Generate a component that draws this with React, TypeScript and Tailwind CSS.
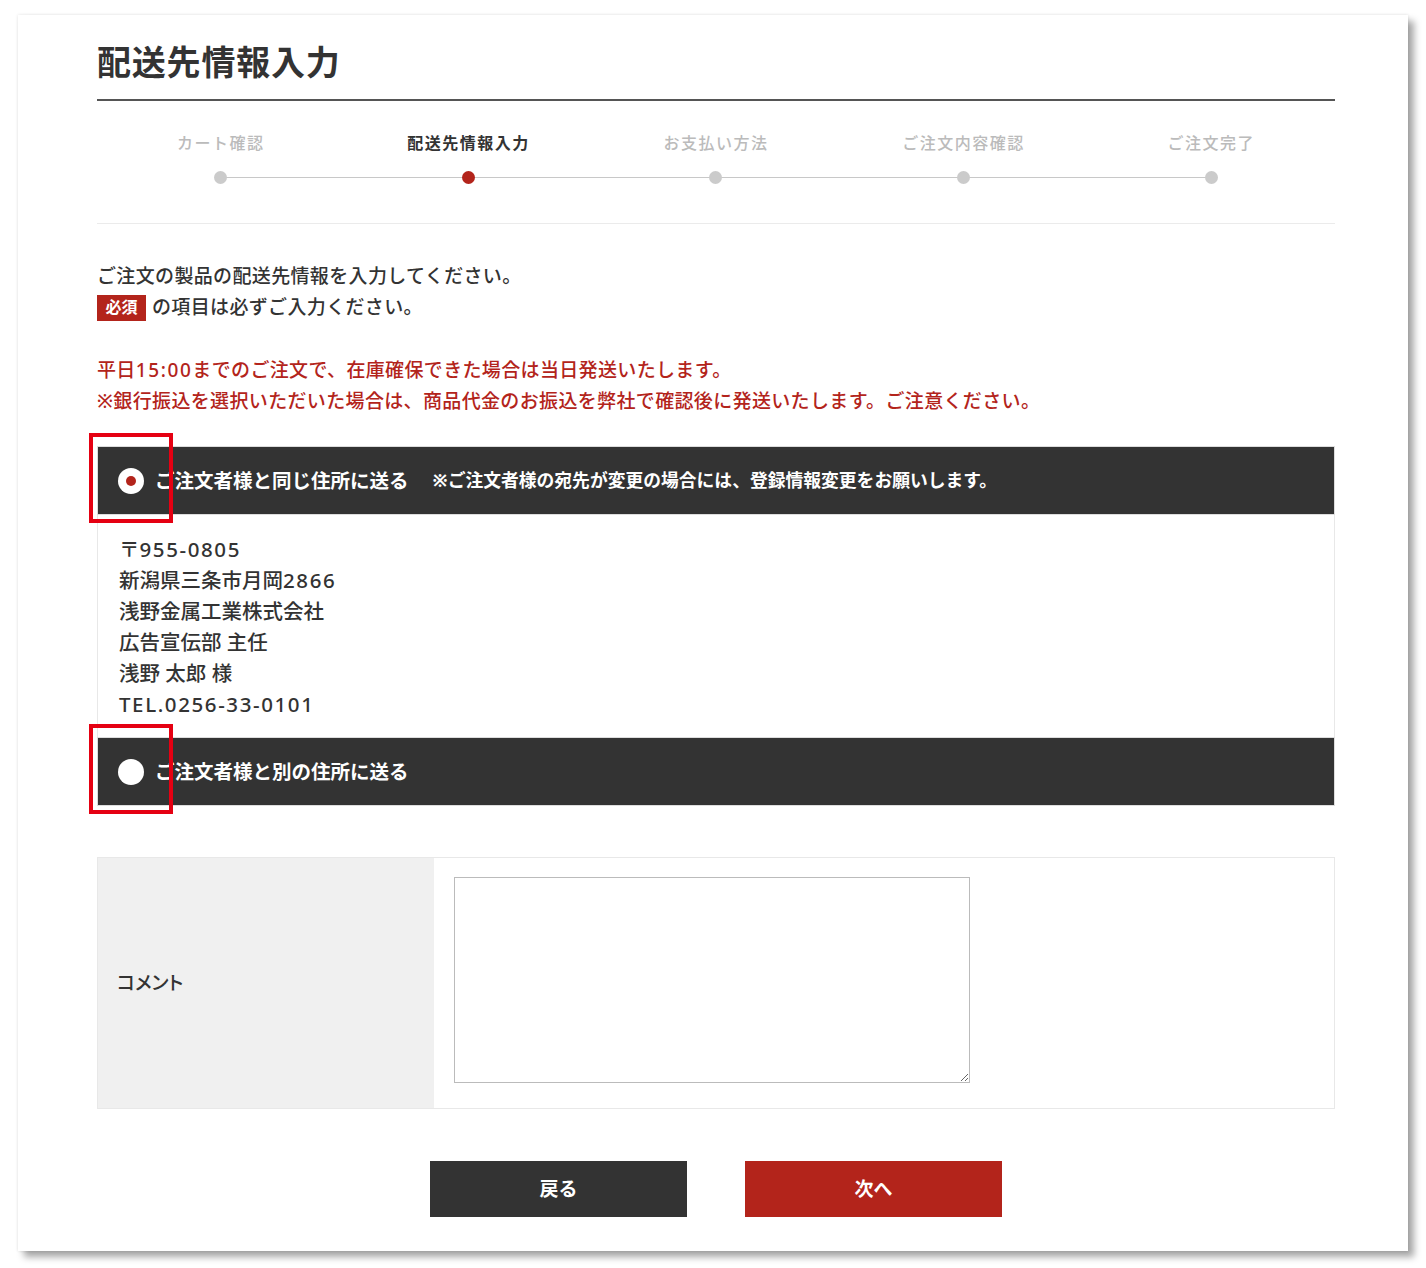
import React from 'react';

const steps = [
  { label: 'カート確認', active: false },
  { label: '配送先情報入力', active: true },
  { label: 'お支払い方法', active: false },
  { label: 'ご注文内容確認', active: false },
  { label: 'ご注文完了', active: false },
];

const address = [
  '〒955-0805',
  '新潟県三条市月岡2866',
  '浅野金属工業株式会社',
  '広告宣伝部 主任',
  '浅野 太郎 様',
  'TEL.0256-33-0101',
];

// latin runs are set a little looser than the kana around them
const Spaced = ({ text }: { text: string }) => (
  <>
    {text.split(/([0-9A-Za-z.:\-]+)/).map((part, i) =>
      i % 2 === 1 ? (
        <span key={i} className="tracking-[1.6px]">
          {part}
        </span>
      ) : (
        <React.Fragment key={i}>{part}</React.Fragment>
      )
    )}
  </>
);

const Radio = ({ checked }: { checked: boolean }) => (
  <span className="flex h-[26px] w-[26px] shrink-0 items-center justify-center rounded-full bg-white">
    {checked && <span className="h-[10px] w-[10px] rounded-full bg-[#b3241b]" />}
  </span>
);

// red annotation frame drawn over the radio
const Marker = () => (
  <span className="pointer-events-none absolute -left-[9px] -top-[14px] z-10 h-[90px] w-[84px] border-4 border-[#e50012]" />
);

const App = () => {
  return (
    <div
      className="min-h-[1268px] w-full bg-white pl-[18px] pt-[15px] text-[#333]"
      style={{ fontFamily: '"Noto Sans", "Noto Sans CJK JP", sans-serif' }}
    >
      <div className="h-[1236px] w-[1390px] bg-white shadow-[0_0_3px_rgba(0,0,0,0.12),6px_6px_7px_rgba(0,0,0,0.35)]">
        <div className="ml-[79px] w-[1238px] pt-[22px]">
          {/* Title */}
          <h1 className="border-b-2 border-[#555] pb-[12px] text-[34px] font-bold leading-[50px] tracking-[0.8px]">
            配送先情報入力
          </h1>

          {/* Stepper */}
          <div className="border-b border-[#ebebeb] pb-[39px] pt-[30px]">
            <div className="relative grid grid-cols-5">
              <span className="absolute left-[10%] right-[10%] top-[46px] h-px bg-[#c8c8c8]" />
              {steps.map((step) => (
                <div key={step.label} className="relative flex flex-col items-center">
                  <span
                    className={`text-[16px] leading-[24px] tracking-[1.5px] ${
                      step.active ? 'font-bold text-[#333]' : 'font-medium text-[#bbb]'
                    }`}
                  >
                    {step.label}
                  </span>
                  <span
                    className={`mt-[16px] h-[13px] w-[13px] rounded-full ${
                      step.active ? 'bg-[#b3241b]' : 'bg-[#cbcbcb]'
                    }`}
                  />
                </div>
              ))}
            </div>
          </div>

          {/* Intro */}
          <div className="pt-[37px] text-[19px] font-medium leading-[31px] tracking-[0.35px]">
            <p>ご注文の製品の配送先情報を入力してください。</p>
            <p className="flex items-center">
              <span className="mr-[6px] inline-flex h-[26px] w-[49px] items-center justify-center bg-[#b3241b] text-[16px] font-bold tracking-normal text-white">
                必須
              </span>
              の項目は必ずご入力ください。
            </p>
          </div>

          <div className="mt-[32px] text-[19px] font-medium leading-[31px] tracking-[0.35px] text-[#b3241b]">
            <p>
              <Spaced text="平日15:00までのご注文で、在庫確保できた場合は当日発送いたします。" />
            </p>
            <p>※銀行振込を選択いただいた場合は、商品代金のお振込を弊社で確認後に発送いたします。ご注意ください。</p>
          </div>

          {/* Delivery options */}
          <div className="mt-[29px]">
            <div className="relative flex h-[69px] items-center border border-[#ddd] bg-[#333] pl-[20px] text-white">
              <Marker />
              <Radio checked />
              <span className="ml-[11px] text-[19.5px] font-bold">ご注文者様と同じ住所に送る</span>
              <span className="ml-[24px] text-[17.8px] font-bold">
                ※ご注文者様の宛先が変更の場合には、登録情報変更をお願いします。
              </span>
            </div>
            <div className="border-x border-[#e8e8e8] pb-[17px] pl-[21px] pt-[19px] text-[20.5px] font-medium leading-[31px]">
              {address.map((line) => (
                <p key={line}>
                  <Spaced text={line} />
                </p>
              ))}
            </div>
            <div className="relative flex h-[69px] items-center border border-[#ddd] bg-[#333] pl-[20px] text-white">
              <Marker />
              <Radio checked={false} />
              <span className="ml-[11px] text-[19.5px] font-bold">ご注文者様と別の住所に送る</span>
            </div>
          </div>

          {/* Comment */}
          <div className="mt-[51px] flex h-[252px] border border-[#e8e8e8]">
            <div className="flex w-[336px] shrink-0 items-center bg-[#f0f0f0] pl-[19px] text-[19px] font-medium [font-feature-settings:'palt']">
              コメント
            </div>
            <div className="flex-1 pl-[20px] pt-[19px]">
              <textarea className="h-[206px] w-[516px] border border-[#bbb] bg-white p-2 text-[16px] outline-none" />
            </div>
          </div>

          {/* Buttons */}
          <div className="mt-[52px] flex justify-center gap-[58px]">
            <button className="h-[56px] w-[257px] bg-[#333] text-[19px] font-bold text-white">戻る</button>
            <button className="h-[56px] w-[257px] bg-[#b3241b] text-[19px] font-bold text-white">次へ</button>
          </div>
        </div>
      </div>
    </div>
  );
};

export default App;
